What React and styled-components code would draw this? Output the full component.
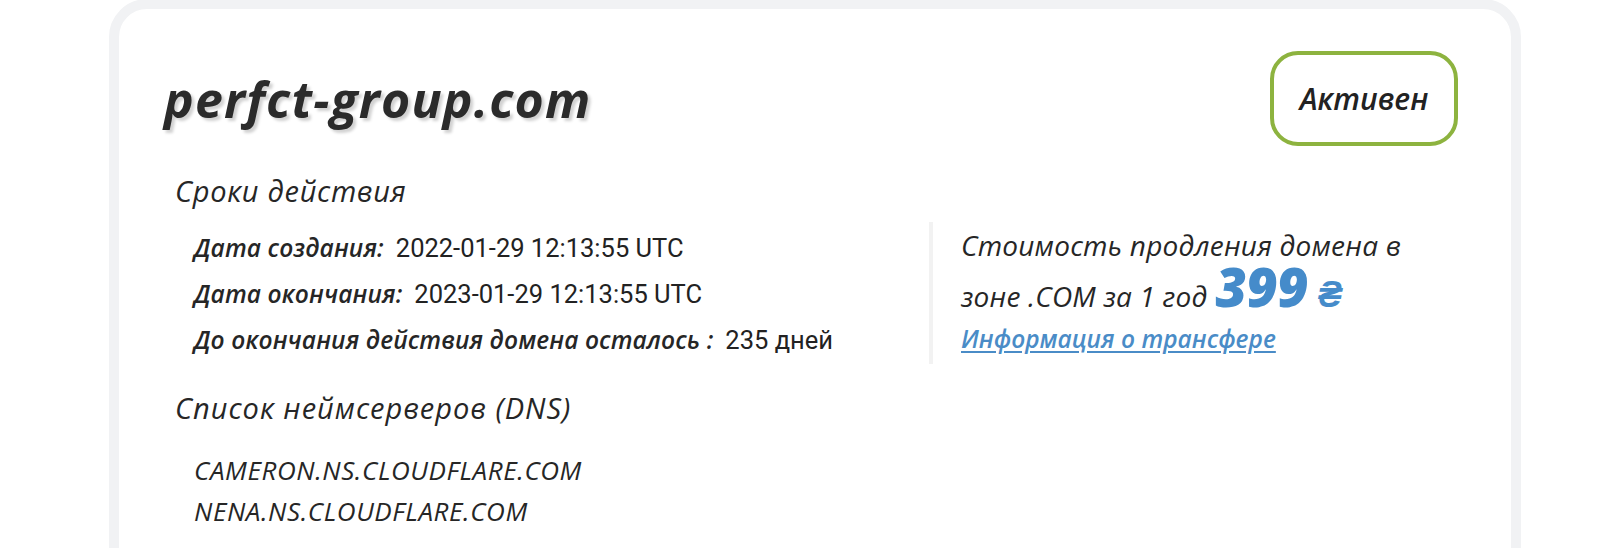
import React from "react";
import styled, { createGlobalStyle } from "styled-components";

const GlobalStyle = createGlobalStyle`
  html, body {
    margin: 0;
    padding: 0;
    background: #ffffff;
    overflow: hidden;
  }
  body {
    font-family: "Open Sans", "Liberation Sans", sans-serif;
    color: #262626;
  }
`;

// card with thick light border, bottom runs off the screen
const Card = styled.div`
  box-sizing: border-box;
  width: 1412px;
  min-height: 620px;
  margin-left: 109px;
  margin-top: -1px;
  border: 10px solid #f1f2f4;
  border-radius: 38px;
  padding: 42px 53px 0 45px;
  background: #fff;
`;

const Header = styled.div`
  display: flex;
  align-items: center;
  justify-content: space-between;
`;

const Domain = styled.h1`
  margin: 0;
  font-size: 50px;
  font-weight: 700;
  font-style: italic;
  letter-spacing: 1.2px;
  color: #2b2b2b;
  text-shadow: 3px 3px 3px rgba(0, 0, 0, 0.18);
`;

const Status = styled.div`
  box-sizing: border-box;
  width: 188px;
  height: 95px;
  display: flex;
  align-items: center;
  justify-content: center;
  border: 4px solid #8db33f;
  border-radius: 28px;
  font-size: 30px;
  font-weight: 600;
  font-style: italic;
  color: #222;
`;

const Body = styled.div`
  display: flex;
  align-items: flex-start;
  margin-top: 27px;
`;

const LeftCol = styled.div`
  width: 754px;
  padding-left: 11px;
`;

const SectionTitle = styled.h2`
  margin: ${(p) => p.$top || 0}px 0 0;
  font-size: 29px;
  font-weight: 500;
  font-style: italic;
  letter-spacing: ${(p) => p.$spacing || 0.7}px;
  line-height: 36px;
  color: #262626;
`;

const Rows = styled.div`
  display: flex;
  flex-direction: column;
  gap: ${(p) => p.$gap}px;
  margin-top: ${(p) => p.$top}px;
  padding-left: 19px;
`;

const Row = styled.div`
  display: flex;
  align-items: baseline;
  gap: 12px;
  line-height: 30px;
`;

const Label = styled.span`
  font-size: 24.5px;
  font-weight: 600;
  font-style: italic;
  letter-spacing: 0.1px;
  color: #262626;
`;

const Value = styled.span`
  font-family: "Roboto", "Liberation Sans", sans-serif;
  font-size: 25.5px;
  color: #222;
`;

const NsName = styled.div`
  font-size: 26px;
  font-weight: 500;
  font-style: italic;
  letter-spacing: 0.6px;
  line-height: 30px;
  color: #262626;
`;

const RightCol = styled.div`
  margin-top: 49px;
  border-left: 4px solid #f2f2f2;
  padding: 0 0 9px 28px;
`;

const PriceLine = styled.div`
  font-size: 28px;
  font-weight: 500;
  font-style: italic;
  letter-spacing: 0.2px;
  line-height: ${(p) => p.$height}px;
  margin-top: ${(p) => p.$top || 0}px;
  color: #262626;
`;

const Price = styled.span`
  font-size: 54px;
  font-weight: 800;
  font-style: italic;
  line-height: 0;
  color: #458bca;
  margin-left: 8px;
  letter-spacing: -0.5px;
`;

const Currency = styled.span`
  font-size: 36px;
  font-weight: 800;
  line-height: 0;
  color: #458bca;
  margin-left: 10px;
`;

const TransferLink = styled.a`
  display: inline-block;
  font-size: 24.5px;
  font-weight: 600;
  font-style: italic;
  color: #4a8cc7;
  text-decoration: underline;
  text-underline-offset: 3px;
`;

export default function App() {
  return (
    <>
      <GlobalStyle />
      <Card>
        <Header>
          <Domain>perfct-group.com</Domain>
          <Status>Активен</Status>
        </Header>
        <Body>
          <LeftCol>
            <SectionTitle>Сроки действия</SectionTitle>
            <Rows $gap={16} $top={24}>
              <Row>
                <Label>Дата создания:</Label>
                <Value>2022-01-29 12:13:55 UTC</Value>
              </Row>
              <Row>
                <Label>Дата окончания:</Label>
                <Value>2023-01-29 12:13:55 UTC</Value>
              </Row>
              <Row>
                <Label>До окончания действия домена осталось :</Label>
                <Value>235 дней</Value>
              </Row>
            </Rows>
            <SectionTitle $top={35} $spacing={1}>
              Список неймсерверов (DNS)
            </SectionTitle>
            <Rows $gap={11} $top={29}>
              <NsName>CAMERON.NS.CLOUDFLARE.COM</NsName>
              <NsName>NENA.NS.CLOUDFLARE.COM</NsName>
            </Rows>
          </LeftCol>
          <RightCol>
            <PriceLine $height={46}>Стоимость продления домена в</PriceLine>
            <PriceLine $height={52} $top={2}>
              зоне .COM за 1 год
              <Price>399</Price>
              <Currency>₴</Currency>
            </PriceLine>
            <TransferLink href="#">Информация о трансфере</TransferLink>
          </RightCol>
        </Body>
      </Card>
    </>
  );
}
